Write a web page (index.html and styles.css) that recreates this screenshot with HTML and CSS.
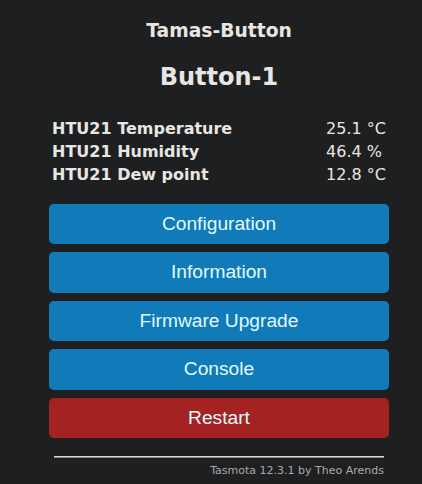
FILE: index.html
```html
<!DOCTYPE html>
<html>
<head>
<meta charset="utf-8">
<link rel="stylesheet" href="styles.css">
</head>
<body>
<div class="wrap">
  <div class="head">
    <h3 class="module">Tamas-Button</h3>
    <h2 class="name">Button-1</h2>
  </div>
  <table class="sensors">
    <tr><th>HTU21 Temperature</th><td>25.1 °C</td></tr>
    <tr><th>HTU21 Humidity</th><td>46.4 %</td></tr>
    <tr><th>HTU21 Dew point</th><td>12.8 °C</td></tr>
  </table>
  <div class="buttons">
    <button class="btn">Configuration</button>
    <button class="btn">Information</button>
    <button class="btn">Firmware Upgrade</button>
    <button class="btn">Console</button>
    <button class="btn btn-red">Restart</button>
  </div>
  <div class="footer">
    <hr class="rule">
    <span class="credit">Tasmota 12.3.1 by Theo Arends</span>
  </div>
</div>
</body>
</html>
```
FILE: styles.css
```css
html, body {
  margin: 0;
  padding: 0;
  background: #1e1f21;
}
body {
  font-family: "DejaVu Sans", Verdana, sans-serif;
  font-size: 16px;
  color: #e8e6e2;
}
.wrap {
  width: 340px;
  margin-left: 49px;
  padding-top: 19px;
}
.head {
  text-align: center;
}
.module {
  margin: 0;
  font-size: 18.72px;
  line-height: 24px;
}
.name {
  margin: 20px 0 0 0;
  font-size: 24px;
  line-height: 28px;
}
.sensors {
  width: 100%;
  margin-top: 25px;
  border-spacing: 2px;
}
.sensors th {
  text-align: left;
  padding: 1px;
  font-weight: bold;
}
.sensors td {
  width: 20px;
  white-space: nowrap;
  padding: 1px;
}
.buttons {
  display: flex;
  flex-direction: column;
  gap: 8px;
  margin-top: 17px;
}
.btn {
  border: 0;
  border-radius: 0.3rem;
  background: #107bb8;
  color: #e4faff;
  font-family: "Liberation Sans", Arial, sans-serif;
  font-size: 19.2px;
  line-height: 38.4px;
  padding: 1px 0;
  width: 100%;
}
.btn-red {
  background: #a52222;
}
.footer {
  text-align: right;
  font-size: 11px;
  margin-top: 18px;
}
.rule {
  margin: 0 5px 0 5px;
  border: 0;
  border-top: 1px solid #d8d8d8;
  border-bottom: 1px solid #8a8a8a;
  height: 0;
}
.credit {
  display: block;
  color: #aaaaaa;
  margin-top: 6px;
  padding-right: 5px;
}
```
